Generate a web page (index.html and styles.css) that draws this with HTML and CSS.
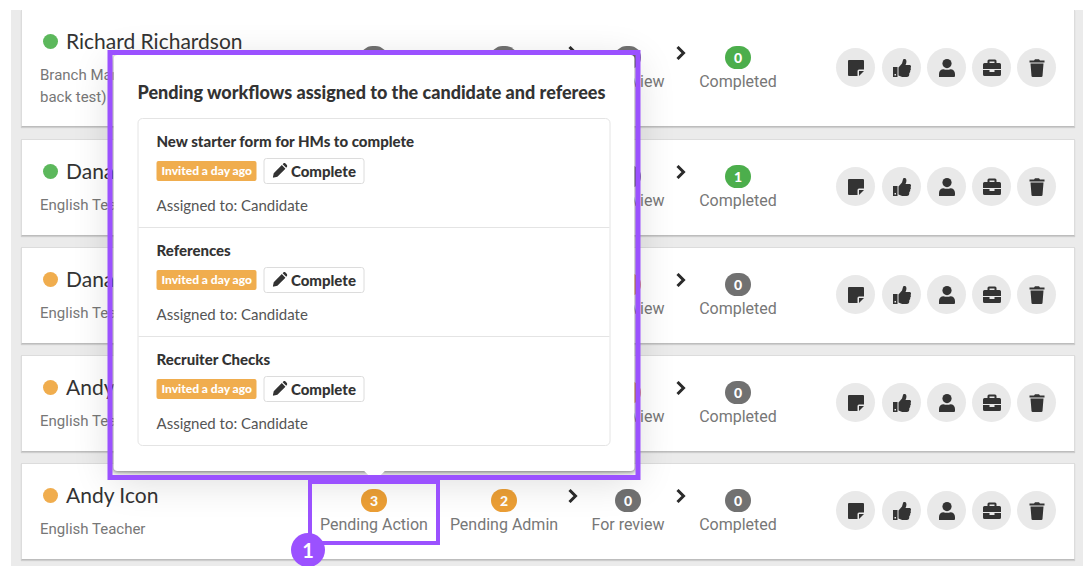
FILE: index.html
```html
<!DOCTYPE html>
<html lang="en">
<head>
  <meta charset="UTF-8" />
  <meta name="viewport" content="width=device-width, initial-scale=1.0"/>
  <title>Candidates</title>
  <link rel="stylesheet" href="styles.css">
</head>
<body>
  <!-- Icon set -->
  <svg width="0" height="0" class="icon-set" aria-hidden="true">
    <symbol id="icon-note" viewBox="0 0 18 18"><path d="M2 1h14a1 1 0 0 1 1 1v8.500h-5a1.500 1.500 0 0 0-1.500 1.500v5H2a1 1 0 0 1-1-1V2a1 1 0 0 1 1-1z"/><path d="M12 12H17L12 17z"/></symbol>
    <symbol id="icon-thumb" viewBox="0 0 18 18"><path fill-rule="evenodd" d="M0 8h4.500v10H0zM1.500 15v1.500H3V15z"/><path d="M5.500 8.500L9 4.500 10 1c.3-1.300 2.900-1.300 3.300.6.4 1.700-.2 3.200-.8 4.400h3.700c2 0 2.300 2 1.300 3 .7 1 .4 2-.4 2.700.4 1-.1 1.900-.8 2.400.2 2.600-.7 3.900-2.400 3.900H10.500c-2 0-3.200-.6-5-1.500z"/></symbol>
    <symbol id="icon-user" viewBox="0 0 18 18"><circle cx="9" cy="4.600" r="4.600"/><path d="M1 18v-3c0-3 2-4.800 4.500-4.800 2 .8 5 .8 7 0C15 10.200 17 12 17 15v2q0 1-1 1z"/></symbol>
    <symbol id="icon-case" viewBox="0 0 18 18"><path fill-rule="evenodd" d="M4.500 4V2Q4.500.5 6 .5h6Q13.500.5 13.500 2v2h3Q18 4 18 5.500V10H0V5.500Q0 4 1.500 4zM6.500 4h5V2.500h-5z"/><path d="M0 11h6.500v2h5v-2H18v4.500q0 1.500-1.500 1.500h-15Q0 17 0 15.500z"/></symbol>
    <symbol id="icon-trash" viewBox="0 0 18 18"><path d="M1.500 1.500H6L7 .3h4l1 1.200h4.500v2h-15zM2.500 4.500h13l-1 12.500q-.1 1-1.200 1H4.700q-1.100 0-1.200-1z"/></symbol>
    <symbol id="icon-chevron" viewBox="0 0 10 14"><path d="M1.500 1l6 6-6 6" fill="none" stroke="currentColor" stroke-width="3"/></symbol>
    <symbol id="icon-pencil" viewBox="0 0 16 16"><path d="M10.800 1.300l1-1q.9-.8 1.800 0l2 2q.8.900 0 1.800l-1 1zM9.900 2.200l3.900 3.900-8.600 8.600L.3 15.700l1-4.900z"/></symbol>
  </svg>

  <main class="candidate-list">
    <article class="card card-first">
      <div class="person">
        <h2 class="name"><span class="dot green"></span>Richard Richardson</h2>
        <p class="role">Branch Manager (call back test)</p>
      </div>
      <div class="stages">
        <div class="stage"><span class="count">0</span><span>Pending Action</span></div>
        <div class="stage"><span class="count">0</span><span>Pending Admin</span></div>
        <svg class="chevron"><use href="#icon-chevron"/></svg>
        <div class="stage"><span class="count">0</span><span>For review</span></div>
        <svg class="chevron"><use href="#icon-chevron"/></svg>
        <div class="stage"><span class="count green">0</span><span>Completed</span></div>
      </div>
      <div class="actions">
        <button type="button" aria-label="Notes"><svg><use href="#icon-note"/></svg></button>
        <button type="button" aria-label="Approve"><svg><use href="#icon-thumb"/></svg></button>
        <button type="button" aria-label="Profile"><svg><use href="#icon-user"/></svg></button>
        <button type="button" aria-label="Job"><svg><use href="#icon-case"/></svg></button>
        <button type="button" aria-label="Delete"><svg><use href="#icon-trash"/></svg></button>
      </div>
    </article>

    <article class="card">
      <div class="person">
        <h2 class="name"><span class="dot green"></span>Dana</h2>
        <p class="role">English Teacher</p>
      </div>
      <div class="stages">
        <div class="stage"><span class="count">0</span><span>Pending Action</span></div>
        <div class="stage"><span class="count">0</span><span>Pending Admin</span></div>
        <svg class="chevron"><use href="#icon-chevron"/></svg>
        <div class="stage"><span class="count">0</span><span>For review</span></div>
        <svg class="chevron"><use href="#icon-chevron"/></svg>
        <div class="stage"><span class="count green">1</span><span>Completed</span></div>
      </div>
      <div class="actions">
        <button type="button" aria-label="Notes"><svg><use href="#icon-note"/></svg></button>
        <button type="button" aria-label="Approve"><svg><use href="#icon-thumb"/></svg></button>
        <button type="button" aria-label="Profile"><svg><use href="#icon-user"/></svg></button>
        <button type="button" aria-label="Job"><svg><use href="#icon-case"/></svg></button>
        <button type="button" aria-label="Delete"><svg><use href="#icon-trash"/></svg></button>
      </div>
    </article>

    <article class="card">
      <div class="person">
        <h2 class="name"><span class="dot orange"></span>Dana</h2>
        <p class="role">English Teacher</p>
      </div>
      <div class="stages">
        <div class="stage"><span class="count">0</span><span>Pending Action</span></div>
        <div class="stage"><span class="count">0</span><span>Pending Admin</span></div>
        <svg class="chevron"><use href="#icon-chevron"/></svg>
        <div class="stage"><span class="count orange">3</span><span>For review</span></div>
        <svg class="chevron"><use href="#icon-chevron"/></svg>
        <div class="stage"><span class="count">0</span><span>Completed</span></div>
      </div>
      <div class="actions">
        <button type="button" aria-label="Notes"><svg><use href="#icon-note"/></svg></button>
        <button type="button" aria-label="Approve"><svg><use href="#icon-thumb"/></svg></button>
        <button type="button" aria-label="Profile"><svg><use href="#icon-user"/></svg></button>
        <button type="button" aria-label="Job"><svg><use href="#icon-case"/></svg></button>
        <button type="button" aria-label="Delete"><svg><use href="#icon-trash"/></svg></button>
      </div>
    </article>

    <article class="card">
      <div class="person">
        <h2 class="name"><span class="dot orange"></span>Andy</h2>
        <p class="role">English Teacher</p>
      </div>
      <div class="stages">
        <div class="stage"><span class="count">0</span><span>Pending Action</span></div>
        <div class="stage"><span class="count">0</span><span>Pending Admin</span></div>
        <svg class="chevron"><use href="#icon-chevron"/></svg>
        <div class="stage"><span class="count orange">3</span><span>For review</span></div>
        <svg class="chevron"><use href="#icon-chevron"/></svg>
        <div class="stage"><span class="count">0</span><span>Completed</span></div>
      </div>
      <div class="actions">
        <button type="button" aria-label="Notes"><svg><use href="#icon-note"/></svg></button>
        <button type="button" aria-label="Approve"><svg><use href="#icon-thumb"/></svg></button>
        <button type="button" aria-label="Profile"><svg><use href="#icon-user"/></svg></button>
        <button type="button" aria-label="Job"><svg><use href="#icon-case"/></svg></button>
        <button type="button" aria-label="Delete"><svg><use href="#icon-trash"/></svg></button>
      </div>
    </article>

    <article class="card">
      <div class="person">
        <h2 class="name"><span class="dot orange"></span>Andy Icon</h2>
        <p class="role">English Teacher</p>
      </div>
      <div class="stages">
        <div class="stage stage-open">
          <span class="count orange">3</span><span>Pending Action</span>

          <!-- Workflow popover -->
          <div class="popover-frame">
            <section class="popover">
              <h3>Pending workflows assigned to the candidate and referees</h3>
              <ul class="workflows">
                <li>
                  <h4>New starter form for HMs to complete</h4>
                  <div class="workflow-row">
                    <span class="tag">Invited a day ago</span>
                    <button type="button" class="complete"><svg><use href="#icon-pencil"/></svg>Complete</button>
                  </div>
                  <p>Assigned to: Candidate</p>
                </li>
                <li>
                  <h4>References</h4>
                  <div class="workflow-row">
                    <span class="tag">Invited a day ago</span>
                    <button type="button" class="complete"><svg><use href="#icon-pencil"/></svg>Complete</button>
                  </div>
                  <p>Assigned to: Candidate</p>
                </li>
                <li>
                  <h4>Recruiter Checks</h4>
                  <div class="workflow-row">
                    <span class="tag">Invited a day ago</span>
                    <button type="button" class="complete"><svg><use href="#icon-pencil"/></svg>Complete</button>
                  </div>
                  <p>Assigned to: Candidate</p>
                </li>
              </ul>
            </section>
          </div>
          <div class="callout"><span class="marker">1</span></div>
        </div>
        <div class="stage"><span class="count orange">2</span><span>Pending Admin</span></div>
        <svg class="chevron"><use href="#icon-chevron"/></svg>
        <div class="stage"><span class="count">0</span><span>For review</span></div>
        <svg class="chevron"><use href="#icon-chevron"/></svg>
        <div class="stage"><span class="count">0</span><span>Completed</span></div>
      </div>
      <div class="actions">
        <button type="button" aria-label="Notes"><svg><use href="#icon-note"/></svg></button>
        <button type="button" aria-label="Approve"><svg><use href="#icon-thumb"/></svg></button>
        <button type="button" aria-label="Profile"><svg><use href="#icon-user"/></svg></button>
        <button type="button" aria-label="Job"><svg><use href="#icon-case"/></svg></button>
        <button type="button" aria-label="Delete"><svg><use href="#icon-trash"/></svg></button>
      </div>
    </article>
  </main>
</body>
</html>
```
FILE: styles.css
```css
* {
  box-sizing: border-box;
}

body {
  margin: 0;
  padding: 10px 9px 0 11px;
  background: #fff;
  color: #333;
  font-family: Roboto, Arial, sans-serif;
  font-size: 15px;
  line-height: 22px;
}

h2, h3, h4, p, ul {
  margin: 0;
  padding: 0;
}

button {
  font: inherit;
  color: inherit;
  cursor: pointer;
}

svg {
  fill: currentColor;
}

.icon-set {
  position: absolute;
}

.candidate-list {
  display: flex;
  flex-direction: column;
  gap: 11px;
  padding: 0 8px 6px 10px;
  background: #ebebeb;
}

.card {
  display: flex;
  align-items: center;
  padding: 17px 18px 19px;
  background: #fff;
  border: 1px solid #dcdcdc;
  border-bottom-color: #bdbdbd;
  box-shadow: 0 1px 1px rgba(0, 0, 0, 0.12);
}

.card-first {
  padding-bottom: 18px;
  margin-bottom: 1px;
  border-top: 0;
}

.person {
  flex: 1;
  min-width: 0;
}

.name {
  display: flex;
  align-items: center;
  gap: 8px;
  padding-left: 3px;
  margin-bottom: 9px;
  font-family: Lato, sans-serif;
  font-size: 21px;
  font-weight: 400;
  line-height: 28px;
}

.dot {
  width: 15px;
  height: 15px;
  border-radius: 50%;
}

.dot.green {
  background: #5cb85c;
}

.dot.orange {
  background: #f0ad4e;
}

.role {
  max-width: 160px;
  color: #777;
}

.stages {
  display: grid;
  grid-template-columns: 132px 128px 12px 96px 12px 100px;
  margin-top: 3px;
  margin-right: 48px;
  color: #777;
  font-size: 16px;
}

.stage {
  display: flex;
  flex-direction: column;
  align-items: center;
  gap: 2px;
  white-space: nowrap;
}

.stage-open {
  position: relative;
}

.count {
  height: 23px;
  padding: 0 9px;
  border-radius: 12px;
  background: #717171;
  color: #fff;
  font-family: Lato, sans-serif;
  font-size: 14px;
  font-weight: 900;
  line-height: 23px;
}

.count.green {
  background: #4cae4c;
}

.count.orange {
  background: #ec9f35;
}

.chevron {
  width: 10px;
  height: 14px;
  color: #2b2b2b;
}

.actions {
  display: flex;
  gap: 6px;
}

.actions button {
  display: flex;
  align-items: center;
  justify-content: center;
  width: 39px;
  height: 39px;
  padding: 0;
  border: 0;
  border-radius: 50%;
  background: #e9e9e9;
}

.actions button:first-child {
  margin-right: 1px;
}

.actions svg {
  width: 18px;
  height: 18px;
}

/* Popover above the open stage */
.popover-frame {
  position: absolute;
  z-index: 2;
  bottom: calc(100% + 9px);
  left: 50%;
  width: 533px;
  padding: 5px 6px 9px;
  transform: translateX(-50%);
  white-space: normal;
}

.popover-frame::after {
  content: "";
  position: absolute;
  inset: 0;
  border: 5px solid #9b51ff;
  pointer-events: none;
}

.popover {
  position: relative;
  padding: 24px 24px 25px;
  border-radius: 4px;
  background: #fff;
  color: #333;
  font-family: Lato, sans-serif;
  font-size: 15px;
  box-shadow: 0 1px 4px rgba(0, 0, 0, 0.5), 0 8px 40px rgba(0, 0, 0, 0.16);
}

.popover::after {
  content: "";
  position: absolute;
  bottom: -7px;
  left: 50%;
  width: 16px;
  height: 16px;
  background: #fff;
  transform: translateX(-50%) rotate(45deg);
}

.popover h3 {
  margin-bottom: 13px;
  font-size: 18px;
  font-weight: 900;
  line-height: 26px;
  white-space: nowrap;
}

.workflows {
  list-style: none;
  border: 1px solid #e4e4e4;
  border-radius: 5px;
}

.workflows li {
  padding: 12px 18px;
  line-height: 20px;
}

.workflows li + li {
  border-top: 1px solid #e4e4e4;
}

.workflows h4 {
  font-size: 15px;
  font-weight: 900;
}

.workflows p {
  color: #555;
}

.workflow-row {
  display: flex;
  align-items: center;
  gap: 7px;
  margin: 7px 0 11px;
}

.tag {
  padding: 0 5px;
  border-radius: 2px;
  background: #f0ad4e;
  color: #fff;
  font-size: 12px;
  font-weight: 900;
}

.complete {
  display: flex;
  align-items: center;
  gap: 3px;
  height: 26px;
  padding: 0 8px;
  border: 1px solid #dcdcdc;
  border-radius: 3px;
  background: #fff;
  font-weight: 900;
}

.complete svg {
  width: 15px;
  height: 15px;
}

/* Numbered highlight round the stage */
.callout {
  position: absolute;
  z-index: 3;
  inset: -9px 0;
  border: 4px solid #9b51ff;
}

.marker {
  position: absolute;
  bottom: -26px;
  left: -21px;
  width: 34px;
  height: 34px;
  border-radius: 50%;
  background: #9b51ff;
  color: #fff;
  font-family: Lato, sans-serif;
  font-size: 20px;
  font-weight: 700;
  line-height: 34px;
  text-align: center;
}
```
